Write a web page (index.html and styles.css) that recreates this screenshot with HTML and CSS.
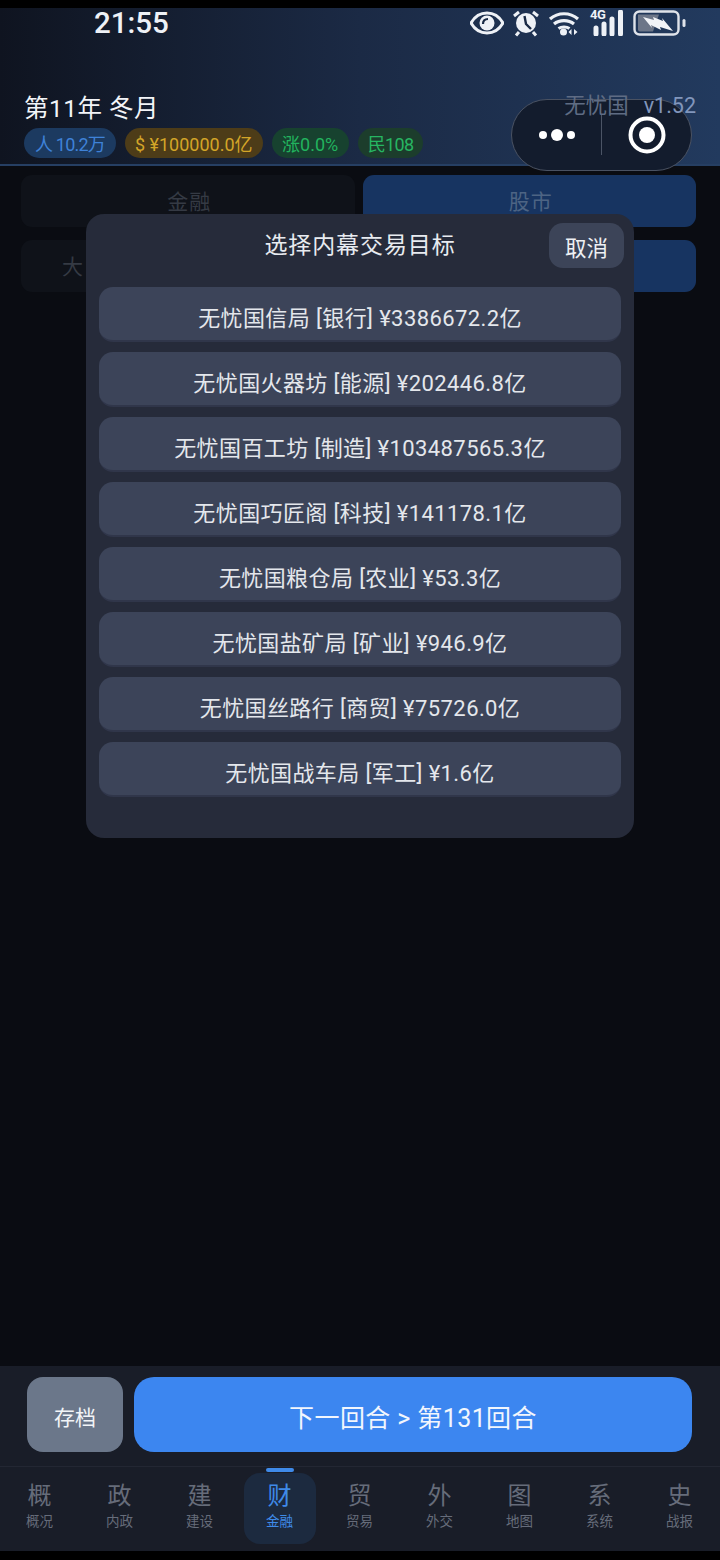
FILE: index.html
```html
<!DOCTYPE html>
<html lang="zh-CN">
<head>
  <meta charset="UTF-8">
  <title>无忧国</title>
  <link rel="stylesheet" href="styles.css">
</head>
<body>
<div class="page">

  <!-- Header -->
  <header class="top">
    <div class="status">
      <span class="clock">21:55</span>
      <div class="status-icons">
        <svg width="34" height="26" viewBox="0 0 34 26"><path d="M1 13C5 6 11 3 17 3s12 3 16 10c-4 7-10 10-16 10S5 20 1 13z" fill="none" stroke="#eef1f6" stroke-width="3"/><circle cx="17" cy="13" r="7.500" fill="#eef1f6"/><path d="M13 14c0-3 2-5 5-5" fill="none" stroke="#1a2a45" stroke-width="2.200"/></svg>
        <svg width="28" height="28" viewBox="0 0 28 28"><circle cx="14" cy="14" r="10" fill="#eef1f6"/><path d="M12.500 7l1.500 8 5 5" fill="none" stroke="#1a2a45" stroke-width="2.400"/><path d="M2 7l5-4M26 7l-5-4M7 23l-3 3.500M21 23l3 3.500" stroke="#eef1f6" stroke-width="3" fill="none"/></svg>
        <svg width="34" height="26" viewBox="0 0 34 26"><path d="M2 9c8-7 20-7 28 0M6 14c5.500-4.500 14.500-4.500 20 0M10.500 18.500c3-2 8-2 11 0" fill="none" stroke="#eef1f6" stroke-width="3.200"/><circle cx="15.500" cy="22" r="3.500" fill="#eef1f6"/><path d="M23.500 19v6l-3-3zM26 19v6l3.500-3z" fill="#eef1f6"/></svg>
        <div class="signal">
          <span class="net">4G</span>
          <svg width="33" height="26" viewBox="0 0 33 26"><path d="M4 18v6M12 14v10M20 9v15M28.500 2v22" fill="none" stroke="#eef1f6" stroke-width="5" stroke-linecap="round"/></svg>
        </div>
        <svg width="54" height="26" viewBox="0 0 54 26"><rect x="1.500" y="1.500" width="44" height="23" rx="5" fill="none" stroke="#dfe3ea" stroke-width="2.400"/><path d="M5 4.500h21l-6 17H7a2 2 0 0 1-2-2z" fill="#6d7688"/><path d="M10 7l11 3-1-3 10 4-1-3 11 13-13-4 1 3-10-5 1 3z" fill="#f2f4f8"/><rect x="49.500" y="9" width="3" height="8" rx="1.500" fill="#dfe3ea"/></svg>
      </div>
    </div>

    <div class="title-row">
      <div class="date">第11年 冬月</div>
      <div class="version"><span class="name">无忧国</span><span class="num">v1.52</span></div>
    </div>

    <div class="pills">
      <span class="pill blue">人 10.2万</span>
      <span class="pill yellow">$ ¥100000.0亿</span>
      <span class="pill green">涨0.0%</span>
      <span class="pill people">民108</span>
    </div>

    <!-- Mini program capsule -->
    <div class="capsule">
      <div class="capsule-part">
        <svg width="40" height="14" viewBox="0 0 40 14"><circle cx="6" cy="7" r="4" fill="#fff"/><circle cx="20" cy="7" r="6" fill="#fff"/><circle cx="34" cy="7" r="4" fill="#fff"/></svg>
      </div>
      <div class="capsule-line"></div>
      <div class="capsule-part">
        <svg width="38" height="38" viewBox="0 0 38 38"><circle cx="19" cy="19" r="16.500" fill="none" stroke="#fff" stroke-width="4"/><circle cx="19" cy="19" r="8" fill="#fff"/></svg>
      </div>
    </div>
  </header>

  <!-- Main -->
  <main class="content">
    <div class="tabs">
      <div class="tab">金融</div>
      <div class="tab on">股市</div>
      <div class="tab start">大</div>
      <div class="tab on"></div>
    </div>

    <div class="overlay">
      <div class="modal">
        <div class="modal-head">
          <h2>选择内幕交易目标</h2>
          <button class="cancel">取消</button>
        </div>
        <div class="targets">
          <button class="target">无忧国信局 [银行] ¥3386672.2亿</button>
          <button class="target">无忧国火器坊 [能源] ¥202446.8亿</button>
          <button class="target">无忧国百工坊 [制造] ¥103487565.3亿</button>
          <button class="target">无忧国巧匠阁 [科技] ¥141178.1亿</button>
          <button class="target">无忧国粮仓局 [农业] ¥53.3亿</button>
          <button class="target">无忧国盐矿局 [矿业] ¥946.9亿</button>
          <button class="target">无忧国丝路行 [商贸] ¥75726.0亿</button>
          <button class="target">无忧国战车局 [军工] ¥1.6亿</button>
        </div>
      </div>
    </div>
  </main>

  <!-- Bottom actions -->
  <div class="actions">
    <button class="save">存档</button>
    <button class="next">下一回合 &gt; 第131回合</button>
  </div>

  <nav class="nav">
    <div class="nav-item"><b>概</b><span>概况</span></div>
    <div class="nav-item"><b>政</b><span>内政</span></div>
    <div class="nav-item"><b>建</b><span>建设</span></div>
    <div class="nav-item active"><b>财</b><span>金融</span></div>
    <div class="nav-item"><b>贸</b><span>贸易</span></div>
    <div class="nav-item"><b>外</b><span>外交</span></div>
    <div class="nav-item"><b>图</b><span>地图</span></div>
    <div class="nav-item"><b>系</b><span>系统</span></div>
    <div class="nav-item"><b>史</b><span>战报</span></div>
  </nav>
</div>
</body>
</html>
```

FILE: styles.css
```css
* {
  box-sizing: border-box;
}

body {
  margin: 0;
  background: #0a0c12;
  font-family: Roboto, "Noto Sans CJK SC", sans-serif;
}

button {
  font-family: inherit;
  border: none;
  padding: 0;
}

.page {
  display: flex;
  flex-direction: column;
  height: 1560px;
  border-top: 8px solid #000;
  border-bottom: 9px solid #000;
  overflow: hidden;
}

/* Header */
.top {
  position: relative;
  height: 158px;
  padding: 0 24px;
  background: linear-gradient(90deg, #0f1420 0%, #1b2a45 50%, #223a5e 100%);
  border-bottom: 2px solid #263f63;
}

.status {
  display: flex;
  justify-content: space-between;
  align-items: center;
  height: 30px;
  padding: 0 9px 0 70px;
}

.clock {
  font-size: 29.500px;
  font-weight: 500;
  line-height: 30px;
  color: #eef1f6;
}

.status-icons {
  display: flex;
  align-items: center;
  gap: 8px;
}

.signal {
  position: relative;
  width: 35px;
  height: 26px;
}

.signal svg {
  position: absolute;
  left: 2px;
  top: 0;
}

.net {
  position: absolute;
  left: 0;
  top: -3px;
  font-size: 13px;
  font-weight: 700;
  letter-spacing: -.5px;
  color: #eef1f6;
}

.title-row {
  display: flex;
  justify-content: space-between;
  align-items: center;
  height: 38px;
  margin-top: 49px;
}

.date {
  font-size: 24.500px;
  letter-spacing: .5px;
  color: #f2f4f8;
}

.version {
  position: relative;
  z-index: 2;
  display: flex;
  align-items: baseline;
  gap: 15px;
  margin-top: -5px;
  font-size: 21.500px;
}

.version .name {
  color: #5f6c84;
}

.version .num {
  color: #8196bc;
}

.pills {
  display: flex;
  gap: 9px;
  margin-top: 3px;
}

.pill {
  display: flex;
  align-items: center;
  height: 30px;
  padding: 0 10px;
  border-radius: 15px;
  font-size: 18px;
}

.pill.blue {
  padding: 0 11px;
  letter-spacing: -.8px;
  background: #1c3a60;
  color: #3f82d8;
}

.pill.yellow {
  background: #4d3c18;
  color: #d3a528;
}

.pill.green {
  padding: 0 10.500px;
  background: #17422f;
  color: #22b35e;
}

.pill.people {
  letter-spacing: -.7px;
  background: #1c3d2c;
  color: #27b562;
}

.capsule {
  position: absolute;
  z-index: 1;
  top: 91px;
  right: 28px;
  display: flex;
  align-items: center;
  width: 181px;
  height: 72px;
  background: #131c2d;
  border: 1.500px solid #4a5262;
  border-radius: 36px;
}

.capsule-part {
  flex: 1;
  display: flex;
  justify-content: center;
  align-items: center;
}

.capsule-line {
  width: 1px;
  height: 40px;
  background: #4b5465;
}

/* Main */
.content {
  position: relative;
  flex: 1;
  padding: 9px 24px 0 21px;
}

.tabs {
  display: grid;
  grid-template-columns: 1fr 1fr;
  grid-auto-rows: 52px;
  gap: 13px 8px;
}

.tab {
  display: flex;
  justify-content: center;
  align-items: center;
  padding: 0 0 2px 3px;
  background: #0f1219;
  border-radius: 11px;
  font-size: 21px;
  letter-spacing: 1px;
  color: #353a44;
}

.tab.on {
  background: #173461;
  color: #4d6484;
}

.tab.start {
  justify-content: flex-start;
  padding-left: 41px;
}

.overlay {
  position: absolute;
  inset: 0;
  display: flex;
  justify-content: center;
  align-items: flex-start;
  padding-top: 48px;
}

.modal {
  width: 548px;
  height: 624px;
  padding: 9px 13px 0;
  background: #262b3a;
  border-radius: 18px;
}

.modal-head {
  position: relative;
  height: 64px;
}

.modal-head h2 {
  margin: 0;
  padding-top: 3px;
  text-align: center;
  font-size: 23px;
  font-weight: 400;
  line-height: 40px;
  letter-spacing: .9px;
  color: #e8ebf0;
}

.cancel {
  position: absolute;
  top: 0;
  right: -3px;
  width: 75px;
  height: 45px;
  padding-top: 1px;
  background: #3c4458;
  border-radius: 14px;
  font-size: 21.500px;
  color: #eef0f4;
}

.targets {
  display: flex;
  flex-direction: column;
  gap: 10px;
}

.target {
  height: 55px;
  padding-top: 10px;
  background: #3c4459;
  border-radius: 14px;
  border-bottom: 2px solid #30364a;
  font-size: 22px;
  line-height: 1;
  letter-spacing: .4px;
  color: #e4e7ec;
}

/* Bottom */
.actions {
  display: flex;
  gap: 11px;
  height: 101px;
  padding: 11px 28px 0 27px;
  background: #191d28;
  border-bottom: 1px solid #232733;
}

.save {
  width: 96px;
  height: 75px;
  padding-top: 2px;
  background: #6b778a;
  border-radius: 16px;
  font-size: 21px;
  color: #f2f4f7;
}

.next {
  flex: 1;
  height: 75px;
  padding-top: 3px;
  background: #3c86f0;
  border-radius: 20px;
  font-size: 25px;
  letter-spacing: .4px;
  color: #f2f6fd;
}

.nav {
  display: grid;
  grid-template-columns: repeat(9, 80px);
  height: 84px;
  background: #191d28;
}

.nav-item {
  position: relative;
  display: flex;
  flex-direction: column;
  align-items: center;
  padding: 13px 1px 0 0;
  color: #666c7a;
}

.nav-item b {
  font-size: 24px;
  font-weight: 400;
  line-height: 32px;
}

.nav-item span {
  font-size: 13.500px;
  line-height: 19px;
}

.nav-item.active {
  color: #3f8ae8;
}

.nav-item.active::before {
  content: "";
  position: absolute;
  top: 6px;
  left: 4px;
  width: 72px;
  height: 71px;
  background: #1c2a3f;
  border-radius: 16px;
}

.nav-item.active::after {
  content: "";
  position: absolute;
  top: 1px;
  left: 26px;
  width: 28px;
  height: 4px;
  background: #3f8ae8;
  border-radius: 2px;
}

.nav-item.active b,
.nav-item.active span {
  position: relative;
}
```
